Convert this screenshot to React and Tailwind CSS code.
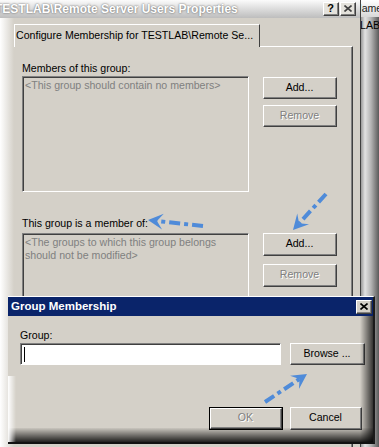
import React from "react";

function Btn({ children, disabled, isDefault, className = "" }) {
  const face = (
    <div className="flex h-full w-full border border-t-white border-l-white border-r-[#404040] border-b-[#404040]">
      <div className="flex h-full w-full items-center justify-center border-r border-b border-[#808080]">
        <span className={disabled ? "text-[#808080] [text-shadow:1px_1px_0_#fff]" : "text-black"}>{children}</span>
      </div>
    </div>
  );
  if (isDefault) {
    return <div className={`border border-black ${className}`}>{face}</div>;
  }
  return <div className={className}>{face}</div>;
}

function Sunken({ className = "", children }) {
  return (
    <div className={`border border-t-[#808080] border-l-[#808080] border-r-white border-b-white ${className}`}>
      <div className="h-full w-full border-t border-l border-[#404040]">{children}</div>
    </div>
  );
}

function XGlyph({ color = "#000" }) {
  return (
    <svg width="8" height="7" viewBox="0 0 8 7">
      <path d="M0.5 0.5 L7.5 6.5 M7.5 0.5 L0.5 6.5" stroke={color} strokeWidth="1.6" />
    </svg>
  );
}

function Arrow({ x1, y1, x2, y2 }) {
  const dx = x2 - x1;
  const dy = y2 - y1;
  const len = Math.hypot(dx, dy);
  const ux = dx / len;
  const uy = dy / len;
  const nx = -uy;
  const ny = ux;
  const bx = x2 - 15 * ux;
  const by = y2 - 15 * uy;
  const mx = x2 - 9 * ux;
  const my = y2 - 9 * uy;
  const pts = [
    [x2, y2],
    [bx + 8 * nx, by + 8 * ny],
    [mx, my],
    [bx - 8 * nx, by - 8 * ny],
  ]
    .map((p) => p.join(","))
    .join(" ");
  return (
    <g>
      <line x1={x1} y1={y1} x2={mx} y2={my} stroke="#4f8bd9" strokeWidth="4" strokeDasharray="11 4 4 4" />
      <polygon points={pts} fill="#4f8bd9" />
    </g>
  );
}

export default function App() {
  return (
    <div className="relative flex h-[447px] w-[379px] overflow-hidden bg-white font-['Liberation_Sans',Arial,sans-serif] text-[10.6px]">
      {/* properties window behind */}
      <div className="flex h-full w-[361px] flex-col border-r border-[#404040] bg-[linear-gradient(90deg,#ffffff_0px,#d4d0c8_14px)]">
        <div className="flex h-[18px] items-center justify-between bg-[linear-gradient(to_bottom,#fbfbfb,#bdbdbd)]">
          <span className="-ml-[5px] text-[12px] font-bold whitespace-nowrap text-white [text-shadow:0_0_2px_#4a4a4a]">
            TESTLAB\Remote Server Users Properties
          </span>
          <div className="flex gap-[1px] pr-[4px]">
            <Btn className="h-[14px] w-[16px] bg-[#e4e2dc]">
              <span className="text-[11px] font-bold leading-none">?</span>
            </Btn>
            <Btn className="h-[14px] w-[16px] bg-[#e4e2dc]">
              <XGlyph color="#404040" />
            </Btn>
          </div>
        </div>

        <div className="relative z-10 ml-[14px] mt-[6px] -mb-[1px] flex h-[23px] w-[246px] items-center border-t border-l border-white border-r border-r-[#404040] bg-[#d4d0c8] pl-[1px] whitespace-nowrap text-black">
          Configure Membership for TESTLAB\Remote Se...
        </div>

        <div className="ml-[14px] w-[339px] flex-1 border-t border-white border-r border-r-[#404040] pl-[8px] shadow-[inset_-1px_0_0_#808080]">
          <div className="mt-[14px] h-[14px] leading-[14px] text-black">Members of this group:</div>
          <div className="mt-[1px] flex gap-[14px]">
            <Sunken className="h-[116px] w-[227px]">
              <div className="pl-[1px] pt-[1px] leading-[13px] text-[#808080]">&lt;This group should contain no members&gt;</div>
            </Sunken>
            <div className="flex flex-col gap-[6px] pt-[1px]">
              <Btn className="h-[22px] w-[74px]">Add...</Btn>
              <Btn disabled className="h-[22px] w-[74px]">Remove</Btn>
            </div>
          </div>

          <div className="mt-[24px] h-[14px] leading-[14px] text-black">This group is a member of:</div>
          <div className="mt-[3px] flex gap-[14px]">
            <Sunken className="h-[80px] w-[227px]">
              <div className="pl-[1px] pt-[1px] leading-[13px] text-[#808080]">
                &lt;The groups to which this group belongs
                <br />
                should not be modified&gt;
              </div>
            </Sunken>
            <div className="flex flex-col gap-[8px]">
              <Btn className="h-[23px] w-[74px]">Add...</Btn>
              <Btn disabled className="h-[23px] w-[74px]">Remove</Btn>
            </div>
          </div>
        </div>
      </div>

      {/* window further behind, right edge */}
      <div className="flex w-[18px] flex-col bg-[linear-gradient(90deg,#9a9a9a_0px,#e2e2e2_4px,#b4b4b4_10px,#5a5a5a_18px)]">
        <div className="flex h-[17px] items-center overflow-hidden bg-[linear-gradient(to_bottom,#ffffff,#d8d8d8)] whitespace-nowrap text-[#202020]">
          <span className="-ml-[7px]">Name</span>
        </div>
        <div className="mt-[2px] overflow-hidden whitespace-nowrap leading-[12px] text-black">
          <span className="-ml-[1px]">LAB</span>
        </div>
      </div>

      {/* group membership dialog on top */}
      <div className="absolute left-[8px] top-[296px] flex h-[148px] w-[367px] flex-col overflow-hidden border-t border-white border-r-2 border-r-[#1a1a1a] border-b-2 border-b-[#111] bg-[#d4d0c8]">
        <div className="flex h-[19px] items-center justify-between bg-[#0a246a] pl-[3px] pr-[1px]">
          <span className="text-[11.5px] font-bold text-white">Group Membership</span>
          <Btn className="h-[14px] w-[16px] bg-[#d4d0c8]">
            <XGlyph />
          </Btn>
        </div>
        <div className="relative flex-1 pl-[12px]">
          <div className="mt-[12px] h-[14px] leading-[14px] text-black">Group:</div>
          <div className="mt-[1px] flex gap-[9px]">
            <Sunken className="h-[22px] w-[261px] bg-white">
              <div className="ml-[2px] mt-[2px] h-[15px] w-px bg-black" />
            </Sunken>
            <Btn className="h-[22px] w-[75px]">Browse ...</Btn>
          </div>
          <div className="ml-[189px] mt-[42px] flex gap-[7px]">
            <Btn isDefault disabled className="h-[23px] w-[74px]">OK</Btn>
            <Btn className="h-[23px] w-[72px]">Cancel</Btn>
          </div>
          <div className="pointer-events-none absolute bottom-0 right-0 top-0 w-[13px] bg-[linear-gradient(90deg,rgba(0,0,0,0),rgba(0,0,0,0.75))]" />
          <div className="pointer-events-none absolute bottom-0 left-0 right-0 h-[14px] bg-[linear-gradient(to_bottom,rgba(0,0,0,0.05),rgba(0,0,0,0.85))]" />
          <div className="pointer-events-none absolute bottom-0 left-0 top-[60px] w-[8px] bg-[linear-gradient(90deg,#ffffff,rgba(255,255,255,0))]" />
        </div>
      </div>

      {/* annotation arrows */}
      <svg className="pointer-events-none absolute inset-0" width="379" height="447" viewBox="0 0 379 447">
        <Arrow x1={326} y1={194} x2={293} y2={230} />
        <Arrow x1={203} y1={226} x2={148} y2={220} />
        <Arrow x1={265} y1={402} x2={307} y2={374} />
      </svg>
    </div>
  );
}
